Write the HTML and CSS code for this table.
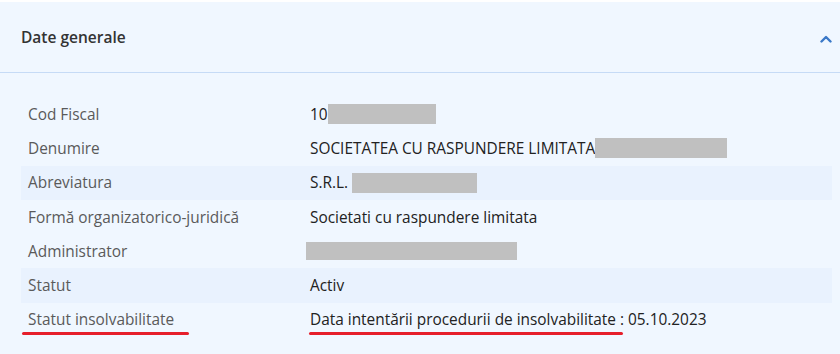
FILE: index.html
```html
<!DOCTYPE html>
<html lang="ro">
<head>
  <meta charset="UTF-8">
  <meta name="viewport" content="width=device-width, initial-scale=1.0">
  <title>Date generale</title>
  <link rel="stylesheet" href="styles.css">
</head>
<body>
  <section class="panel">
    <header class="panel-head">
      <h2>Date generale</h2>
      <svg class="chevron" width="12" height="8" viewBox="0 0 12 8" aria-hidden="true">
        <path d="M1.5 6.5 L6 2 L10.5 6.5" fill="none" stroke="#3a78c8" stroke-width="2.4" stroke-linecap="round" stroke-linejoin="round"/>
      </svg>
    </header>

    <div class="panel-body">
      <div class="info">
        <div class="row">
          <span class="label">Cod Fiscal</span>
          <span class="value">10<span class="hidden-data" style="width: 108px"></span></span>
        </div>
        <div class="row">
          <span class="label">Denumire</span>
          <span class="value">SOCIETATEA CU RASPUNDERE LIMITATA<span class="hidden-data" style="width: 132px"></span></span>
        </div>
        <div class="row">
          <span class="label">Abreviatura</span>
          <span class="value">S.R.L. <span class="hidden-data" style="width: 125px"></span></span>
        </div>
        <div class="row">
          <span class="label">Formă organizatorico-juridică</span>
          <span class="value">Societati cu raspundere limitata</span>
        </div>
        <div class="row">
          <span class="label">Administrator</span>
          <span class="value"><span class="hidden-data wide" style="width: 211px"></span></span>
        </div>
        <div class="row">
          <span class="label">Statut</span>
          <span class="value">Activ</span>
        </div>
        <div class="row">
          <span class="label"><span class="marked mark-label">Statut insolvabilitate</span></span>
          <span class="value"><span class="marked">Data intentării procedurii de insolvabilitate</span> : 05.10.2023</span>
        </div>
      </div>
    </div>
  </section>
</body>
</html>
```

FILE: styles.css
```css
* { box-sizing: border-box; }
body { margin: 0; padding-top: 2px; background: #fff; font-family: "Open Sans", "Noto Sans", Arial, sans-serif; color: #222; }

.panel { background: #f0f7ff; min-height: 352px; }
.panel-head { height: 71px; display: flex; align-items: center; justify-content: space-between; padding: 0 8px 0 21px; border-bottom: 1px solid #c6dbf6; }
.panel-head h2 { margin: 0; font-size: 15.5px; font-weight: 600; color: #333; }
.chevron { margin-top: 3px; }

.panel-body { padding: 24px 8px 16px 21px; }
.info { display: flex; flex-direction: column; }
.row { display: grid; grid-template-columns: 282px 1fr; align-items: center; height: 34.3px; padding-left: 7px; font-size: 15.4px; }
.row:nth-child(3n) { background: #e9f2fe; }
.label { color: #5a5a5a; }
.value { color: #222; display: flex; align-items: center; white-space: pre; }

.hidden-data { display: inline-block; height: 20px; background: #c0c0c0; }
.hidden-data.wide { height: 18px; margin-left: -4px; }

.marked { position: relative; }
.marked::after { content: ""; position: absolute; left: -1px; right: -7px; bottom: -5px; height: 3px; border-radius: 2px; background: #e61f2b; }
.mark-label::after { left: -6px; right: -15px; }
```
